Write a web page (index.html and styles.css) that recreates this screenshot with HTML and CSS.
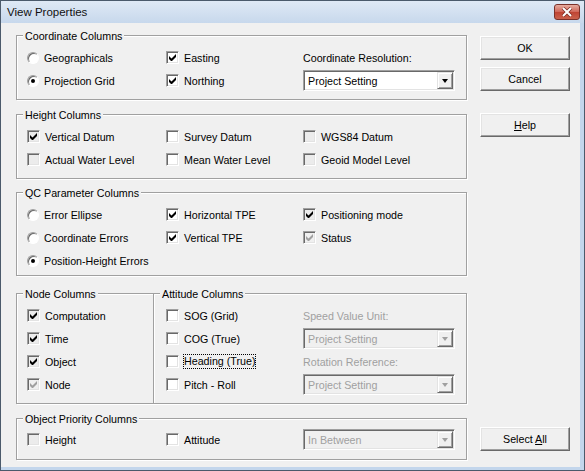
FILE: index.html
```html
<!DOCTYPE html>
<html lang="en">
<head>
    <meta charset="UTF-8">
    <title>View Properties</title>
    <link rel="stylesheet" href="styles.css">
</head>
<body>
    <div class="window">
        <div class="titlebar">
            <span class="title">View Properties</span>
            <div class="close">
                <svg width="14" height="10" viewBox="0 0 14 10">
                    <path d="M3 1 L11 9 M11 1 L3 9" stroke="#7a2a22" stroke-width="3.4" />
                    <path d="M3 1 L11 9 M11 1 L3 9" stroke="#fff" stroke-width="2" />
                </svg>
            </div>
        </div>
        <div class="client">
            <div class="groups">
                <div class="group coord">
                    <span class="legend">Coordinate Columns</span>
                    <div class="grid">
                        <div class="item"><span class="radio"></span>Geographicals</div>
                        <div class="item"><span class="cb checked"></span>Easting</div>
                        <div class="item">Coordinate Resolution:</div>
                        <div class="item"><span class="radio on"></span>Projection Grid</div>
                        <div class="item"><span class="cb checked"></span>Northing</div>
                        <div class="item">
                            <div class="select">
                                <span class="value">Project Setting</span>
                                <span class="drop"><i class="arrow"></i></span>
                            </div>
                        </div>
                    </div>
                </div>

                <div class="group height">
                    <span class="legend">Height Columns</span>
                    <div class="grid">
                        <div class="item"><span class="cb checked grey"></span>Vertical Datum</div>
                        <div class="item"><span class="cb"></span>Survey Datum</div>
                        <div class="item"><span class="cb grey"></span>WGS84 Datum</div>
                        <div class="item"><span class="cb grey"></span>Actual Water Level</div>
                        <div class="item"><span class="cb"></span>Mean Water Level</div>
                        <div class="item"><span class="cb grey"></span>Geoid Model Level</div>
                    </div>
                </div>

                <div class="group qc">
                    <span class="legend">QC Parameter Columns</span>
                    <div class="grid">
                        <div class="item"><span class="radio"></span>Error Ellipse</div>
                        <div class="item"><span class="cb checked"></span>Horizontal TPE</div>
                        <div class="item"><span class="cb checked grey"></span>Positioning mode</div>
                        <div class="item"><span class="radio"></span>Coordinate Errors</div>
                        <div class="item"><span class="cb checked"></span>Vertical TPE</div>
                        <div class="item"><span class="cb checked disabled"></span>Status</div>
                        <div class="item"><span class="radio on"></span>Position-Height Errors</div>
                    </div>
                </div>

                <div class="split">
                    <div class="group node">
                        <span class="legend">Node Columns</span>
                        <div class="col">
                            <div class="item"><span class="cb checked grey"></span>Computation</div>
                            <div class="item"><span class="cb checked grey"></span>Time</div>
                            <div class="item"><span class="cb checked grey"></span>Object</div>
                            <div class="item"><span class="cb checked disabled"></span>Node</div>
                        </div>
                    </div>
                    <div class="group attitude">
                        <span class="legend">Attitude Columns</span>
                        <div class="att-grid">
                            <div class="item"><span class="cb"></span>SOG (Grid)</div>
                            <div class="item off">Speed Value Unit:</div>
                            <div class="item"><span class="cb"></span>COG (True)</div>
                            <div class="item">
                                <div class="select disabled">
                                    <span class="value">Project Setting</span>
                                    <span class="drop"><i class="arrow"></i></span>
                                </div>
                            </div>
                            <div class="item"><span class="cb"></span><span class="focus">Heading (True)</span></div>
                            <div class="item off">Rotation Reference:</div>
                            <div class="item"><span class="cb"></span>Pitch - Roll</div>
                            <div class="item">
                                <div class="select disabled">
                                    <span class="value">Project Setting</span>
                                    <span class="drop"><i class="arrow"></i></span>
                                </div>
                            </div>
                        </div>
                    </div>
                </div>

                <div class="group priority">
                    <span class="legend">Object Priority Columns</span>
                    <div class="grid">
                        <div class="item"><span class="cb grey"></span>Height</div>
                        <div class="item"><span class="cb"></span>Attitude</div>
                        <div class="item">
                            <div class="select disabled">
                                <span class="value">In Between</span>
                                <span class="drop"><i class="arrow"></i></span>
                            </div>
                        </div>
                    </div>
                </div>
            </div>

            <div class="buttons">
                <div class="btn"><span>OK</span></div>
                <div class="btn cancel"><span>Cancel</span></div>
                <div class="btn help"><span><u>H</u>elp</span></div>
                <div class="btn select-all"><span>Select <u>A</u>ll</span></div>
            </div>
        </div>
    </div>
</body>
</html>
```

FILE: styles.css
```css
body {
    margin: 0;
    font-family: "Liberation Sans", Arial, sans-serif;
    font-size: 10.7px;
    color: #000;
    background: #fff;
}
.window {
    width: 585px;
    height: 471px;
    box-sizing: border-box;
    border: 1px solid #4b5a6b;
    display: flex;
    flex-direction: column;
}
.titlebar {
    height: 22px;
    flex: none;
    display: flex;
    align-items: center;
    padding-left: 6px;
    background: linear-gradient(to bottom, #dfe9f5, #c7d8ec);
}
.title {
    font-size: 11.5px;
    color: #111;
}
.close {
    margin-left: auto;
    margin-right: 4px;
    width: 26px;
    height: 16px;
    box-sizing: border-box;
    border: 1px solid #7b3129;
    border-radius: 3px;
    background: linear-gradient(to bottom, #e7ac9f, #d0685a 48%, #bf4433 52%, #c9614c);
    display: flex;
    align-items: center;
    justify-content: center;
}
.client {
    flex: 1;
    display: flex;
    background: #f0f0f0;
    border-right: 4px solid #c3d6ec;
    border-bottom: 3px solid #c3d6ec;
    padding-left: 15px;
}
.groups {
    width: 451px;
    padding-top: 12px;
}
.group {
    position: relative;
    border: 1px solid #a0a0a0;
    box-shadow: 1px 1px 0 #fff, inset 1px 1px 0 #fff;
    padding: 10px 0 7px 10px;
}
.legend {
    position: absolute;
    top: -6px;
    left: 6px;
    padding: 0 2px;
    line-height: 13px;
    background: #f0f0f0;
    white-space: nowrap;
}
.coord {
    margin-bottom: 14px;
}
.height {
    margin-bottom: 13px;
}
.qc {
    padding-bottom: 3px;
    margin-bottom: 17px;
}
.split {
    display: flex;
    margin-bottom: 14px;
}
.priority {
    padding-top: 9px;
    padding-bottom: 8px;
}
.node {
    width: 138px;
    box-sizing: border-box;
}
.attitude {
    flex: 1;
    border-left: none;
    padding-left: 12px;
}
.attitude .legend {
    left: 6px;
}
.grid {
    display: grid;
    grid-template-columns: 139px 137px 152px;
    grid-auto-rows: 23px;
}
.att-grid {
    display: grid;
    grid-template-columns: 137px 152px;
    grid-auto-rows: 23px;
}
.col {
    display: grid;
    grid-auto-rows: 23px;
}
.item {
    display: flex;
    align-items: center;
    gap: 5px;
    white-space: nowrap;
}
.off {
    color: #a0a0a0;
}
.focus {
    outline: 1px dotted #000;
    outline-offset: 0;
    line-height: 13px;
}

/* check boxes and radios */
.cb {
    width: 13px;
    height: 13px;
    box-sizing: border-box;
    flex: none;
    position: relative;
    border: 1px solid;
    border-color: #a0a0a0 #fff #fff #a0a0a0;
    box-shadow: inset 1px 1px 0 #696969, inset -1px -1px 0 #e3e3e3;
    background: #fff;
}
.cb.grey {
    background: #ececec;
}
.cb.disabled {
    background: #f0f0f0;
}
.cb.checked::after {
    content: "";
    position: absolute;
    left: 2px;
    top: 2px;
    width: 7px;
    height: 7px;
    background: no-repeat center / 7px 7px url("data:image/svg+xml,%3Csvg xmlns='http://www.w3.org/2000/svg' viewBox='0 0 7 7'%3E%3Cpath d='M0 2v3l2 2h1l4-4V0L2.5 4.5z' fill='%23000'/%3E%3C/svg%3E");
}
.cb.disabled.checked::after {
    background-image: url("data:image/svg+xml,%3Csvg xmlns='http://www.w3.org/2000/svg' viewBox='0 0 7 7'%3E%3Cpath d='M0 2v3l2 2h1l4-4V0L2.5 4.5z' fill='%23a0a0a0'/%3E%3C/svg%3E");
}
.radio {
    width: 12px;
    height: 12px;
    box-sizing: border-box;
    flex: none;
    position: relative;
    border-radius: 50%;
    border: 1px solid;
    border-color: #a0a0a0 #fff #fff #a0a0a0;
    box-shadow: inset 1px 1px 0 #696969;
    background: #fff;
}
.radio.on::after {
    content: "";
    position: absolute;
    left: 3px;
    top: 3px;
    width: 4px;
    height: 4px;
    border-radius: 50%;
    background: #000;
}

/* drop down lists */
.select {
    width: 152px;
    height: 21px;
    box-sizing: border-box;
    display: flex;
    align-items: stretch;
    border: 1px solid;
    border-color: #a0a0a0 #fff #fff #a0a0a0;
    box-shadow: inset 1px 1px 0 #696969, inset -1px -1px 0 #e3e3e3;
    background: #fff;
    padding: 1px;
}
.select .value {
    flex: 1;
    display: flex;
    align-items: center;
    padding-left: 3px;
}
.select .drop {
    width: 16px;
    box-sizing: border-box;
    display: flex;
    align-items: center;
    justify-content: center;
    background: #f0f0f0;
    border: 1px solid;
    border-color: #e3e3e3 #696969 #696969 #e3e3e3;
    box-shadow: inset 1px 1px 0 #fff, inset -1px -1px 0 #a0a0a0;
}
.arrow {
    width: 0;
    height: 0;
    border-left: 3.5px solid transparent;
    border-right: 3.5px solid transparent;
    border-top: 4px solid #000;
}
.select.disabled {
    background: #f0f0f0;
    color: #a0a0a0;
}
.select.disabled .arrow {
    border-top-color: #a0a0a0;
}

/* buttons */
.buttons {
    width: 90px;
    margin-left: 13px;
    padding-top: 13px;
    padding-bottom: 16px;
    display: flex;
    flex-direction: column;
}
.btn {
    height: 24px;
    box-sizing: border-box;
    display: flex;
    align-items: center;
    justify-content: center;
    border: 1px solid;
    border-color: #fff #696969 #696969 #fff;
    box-shadow: inset -1px -1px 0 #a0a0a0, inset 1px 1px 0 #e3e3e3;
    background: #f0f0f0;
}
.cancel {
    margin-top: 7px;
}
.help {
    margin-top: 22px;
}
.select-all {
    margin-top: auto;
}
```
